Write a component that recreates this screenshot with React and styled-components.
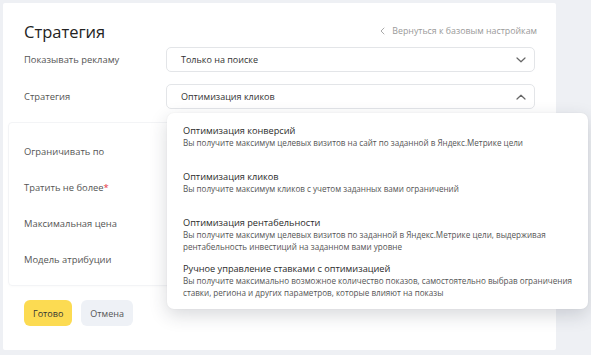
import React from 'react';
import styled, { createGlobalStyle } from 'styled-components';

const GlobalStyle = createGlobalStyle`
  html, body {
    margin: 0;
    padding: 0;
    background: #eef0f4;
    font-family: "Open Sans", "Liberation Sans", sans-serif;
  }
`;

const Page = styled.div`
  width: 591px;
  height: 355px;
  padding: 3px 0 0 3px;
  box-sizing: border-box;
  overflow: hidden;
`;

const Card = styled.div`
  width: 553px;
  height: 347px;
  background: #fff;
  border-radius: 2px;
  box-sizing: border-box;
  padding: 18px 5px 0 5px;
`;

const Header = styled.div`
  display: flex;
  align-items: center;
  justify-content: space-between;
  height: 20px;
  padding: 0 14px 0 16px;
  margin-bottom: 6px;
`;

const Title = styled.h2`
  margin: 0;
  font-size: 16.5px;
  font-weight: 500;
  color: #232323;
`;

const BackLink = styled.a`
  display: flex;
  align-items: center;
  gap: 7px;
  font-size: 8.8px;
  color: #9a9a9a;
  text-decoration: none;
`;

const Rows = styled.div`
  display: flex;
  flex-direction: column;
  gap: 12px;
  padding: 0 16px;
`;

const Row = styled.div`
  display: grid;
  grid-template-columns: 142px 1fr;
  align-items: center;
  height: 25px;
`;

const Label = styled.div`
  font-size: 9.4px;
  color: #555;
`;

const Req = styled.span`
  color: #e5333d;
`;

const SelectWrap = styled.div`
  position: relative;
`;

const Select = styled.div`
  height: 25px;
  box-sizing: border-box;
  border: 1px solid #e3e5e8;
  border-radius: 5px;
  display: flex;
  align-items: center;
  justify-content: space-between;
  padding: 0 8px 0 14px;
  font-size: 9px;
  color: #333;
`;

const Dropdown = styled.div`
  position: absolute;
  top: 29px;
  left: 1px;
  width: 421px;
  background: #fff;
  border-radius: 7px;
  box-shadow: 0 6px 18px rgba(40, 45, 60, 0.18), 0 0 2px rgba(0, 0, 0, 0.06);
  padding: 6px 0;
  z-index: 2;
`;

const Option = styled.div`
  min-height: 46px;
  box-sizing: border-box;
  padding: 5px 16px;
`;

const OptTitle = styled.div`
  font-size: 9.2px;
  font-weight: 500;
  line-height: 13px;
  color: #2b2b2b;
  white-space: nowrap;
`;

const OptDesc = styled.div`
  font-size: 8.1px;
  line-height: 11.5px;
  color: #555;
  white-space: nowrap;
`;

const Section = styled.div`
  margin-top: 13px;
  border: 1px solid #f3f4f6;
  border-radius: 4px;
  box-shadow: 0 1px 3px rgba(0, 0, 0, 0.02);
  padding: 10px 16px 8px 15px;
`;

const SectionRow = styled.div`
  height: 36px;
  display: flex;
  align-items: center;
`;

const Buttons = styled.div`
  display: flex;
  gap: 9px;
  margin-top: 14px;
  padding: 0 16px;
`;

const Button = styled.button`
  height: 26px;
  border: none;
  border-radius: 6px;
  padding: 0 9px;
  font-family: inherit;
  font-size: 9px;
  color: ${p => (p.$primary ? '#333' : '#555')};
  background: ${p => (p.$primary ? '#fcdb52' : '#eef1f6')};
`;

const Chevron = ({ up }) => (
  <svg width="10" height="6" viewBox="0 0 10 6" fill="none">
    <path
      d={up ? 'M1 5L5 1.2L9 5' : 'M1 1L5 4.8L9 1'}
      stroke="#666"
      strokeWidth="1.2"
      strokeLinecap="round"
      strokeLinejoin="round"
    />
  </svg>
);

const options = [
  {
    title: 'Оптимизация конверсий',
    desc: ['Вы получите максимум целевых визитов на сайт по заданной в Яндекс.Метрике цели'],
  },
  {
    title: 'Оптимизация кликов',
    desc: ['Вы получите максимум кликов с учетом заданных вами ограничений'],
  },
  {
    title: 'Оптимизация рентабельности',
    desc: [
      'Вы получите максимум целевых визитов по заданной в Яндекс.Метрике цели, выдерживая',
      'рентабельность инвестиций на заданном вами уровне',
    ],
  },
  {
    title: 'Ручное управление ставками с оптимизацией',
    desc: [
      'Вы получите максимально возможное количество показов, самостоятельно выбрав ограничения',
      'ставки, региона и других параметров, которые влияют на показы',
    ],
  },
];

export default function App() {
  return (
    <Page>
      <GlobalStyle />
      <Card>
        <Header>
          <Title>Стратегия</Title>
          <BackLink href="#">
            <svg width="5" height="8" viewBox="0 0 5 8" fill="none">
              <path d="M4 1L1 4L4 7" stroke="#aaa" strokeWidth="1" strokeLinecap="round" />
            </svg>
            Вернуться к базовым настройкам
          </BackLink>
        </Header>

        <Rows>
          <Row>
            <Label>Показывать рекламу</Label>
            <SelectWrap>
              <Select>
                Только на поиске
                <Chevron />
              </Select>
            </SelectWrap>
          </Row>
          <Row>
            <Label>Стратегия</Label>
            <SelectWrap>
              <Select>
                Оптимизация кликов
                <Chevron up />
              </Select>
              <Dropdown>
                {options.map(o => (
                  <Option key={o.title}>
                    <OptTitle>{o.title}</OptTitle>
                    {o.desc.map(d => (
                      <OptDesc key={d}>{d}</OptDesc>
                    ))}
                  </Option>
                ))}
              </Dropdown>
            </SelectWrap>
          </Row>
        </Rows>

        <Section>
          <SectionRow><Label>Ограничивать по</Label></SectionRow>
          <SectionRow><Label>Тратить не более<Req>*</Req></Label></SectionRow>
          <SectionRow><Label>Максимальная цена</Label></SectionRow>
          <SectionRow><Label>Модель атрибуции</Label></SectionRow>
        </Section>

        <Buttons>
          <Button $primary>Готово</Button>
          <Button>Отмена</Button>
        </Buttons>
      </Card>
    </Page>
  );
}
